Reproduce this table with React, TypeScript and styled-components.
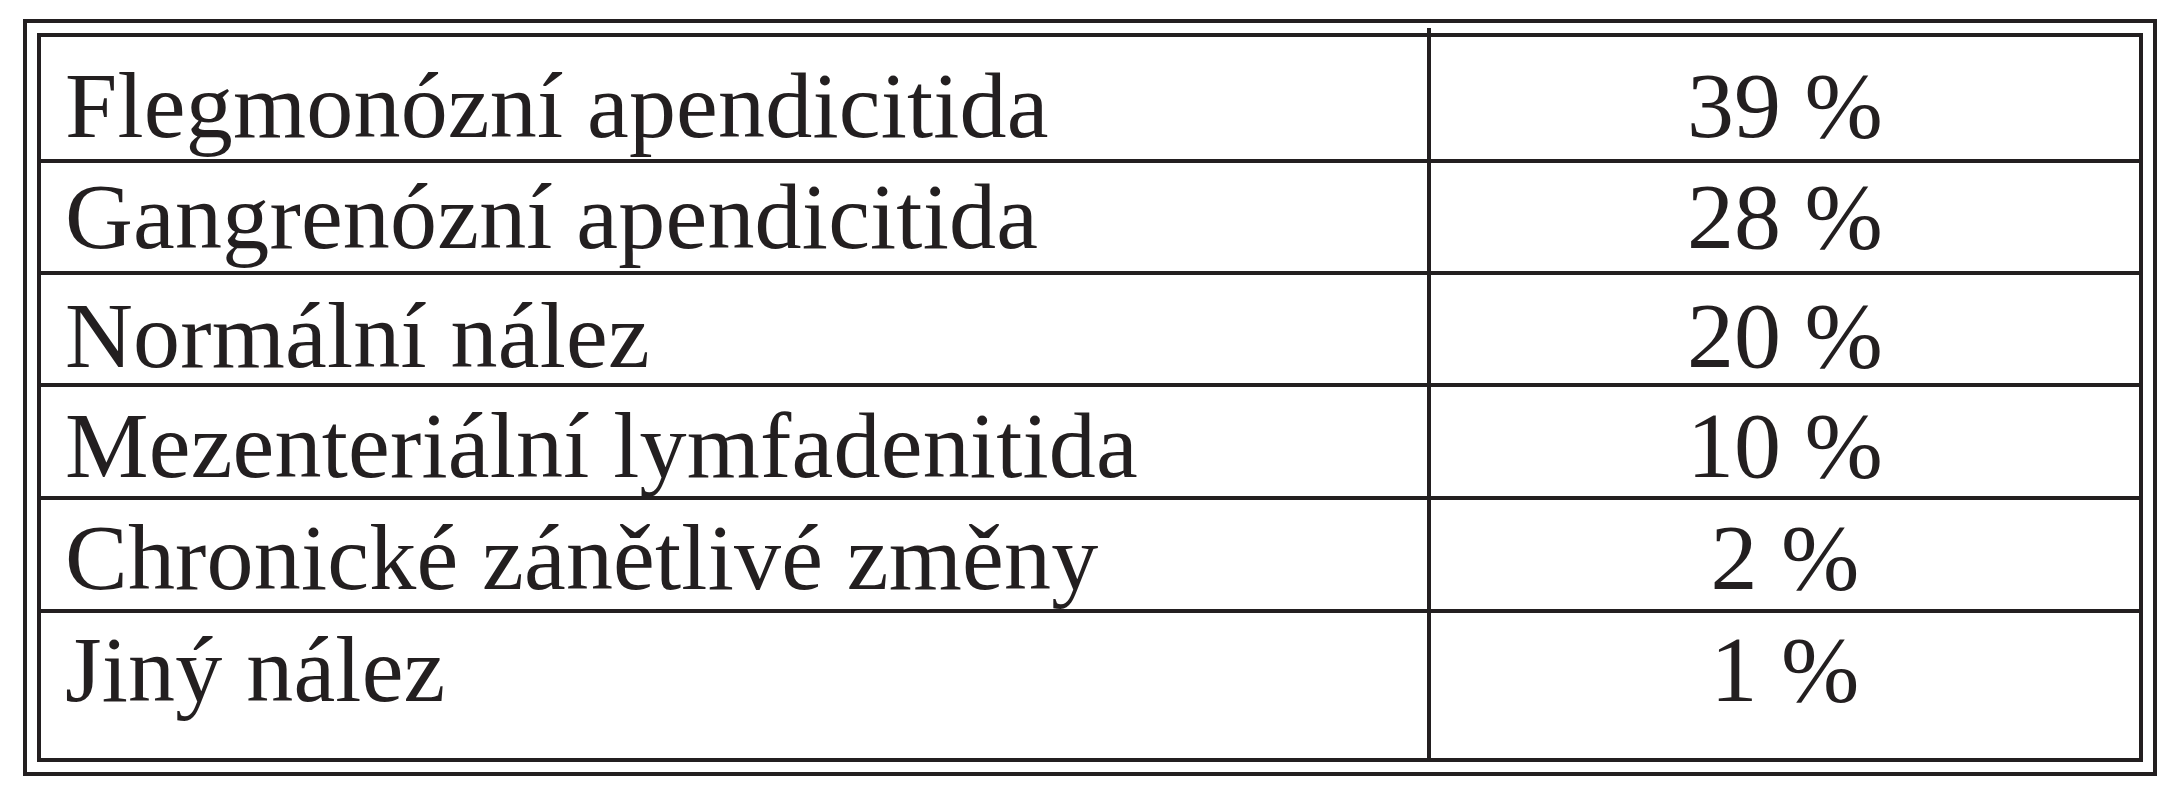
import React from "react";
import styled, { createGlobalStyle } from "styled-components";

const GlobalStyle = createGlobalStyle`
  html, body {
    margin: 0;
    padding: 0;
    background: #ffffff;
  }
  body {
    font-family: "Liberation Serif", "Times New Roman", serif;
    color: #231f20;
  }
`;

const Page = styled.div`
  padding: 19px 0 0 23px;
`;

const OuterFrame = styled.div`
  box-sizing: border-box;
  width: 2134px;
  height: 757px;
  border: 4px solid #231f20;
  padding: 10px;
`;

const InnerFrame = styled.div`
  box-sizing: border-box;
  height: 100%;
  border: 4px solid #231f20;
  display: flex;
  flex-direction: column;
`;

const Row = styled.div<{ $h: number; $first?: boolean }>`
  box-sizing: border-box;
  display: grid;
  grid-template-columns: 1390px 1fr;
  height: ${(p) => p.$h + (p.$first ? 0 : 4)}px;
  border-top: ${(p) => (p.$first ? "none" : "4px solid #231f20")};
`;

const Cell = styled.div<{ $pt: number }>`
  box-sizing: border-box;
  padding-top: ${(p) => p.$pt}px;
  font-size: 94px;
  line-height: 1;
  white-space: nowrap;
`;

const LabelCell = styled(Cell)<{ $stub?: boolean }>`
  position: relative;
  padding-left: 24px;
  letter-spacing: 0.2px;
  border-right: 4px solid #231f20;

  ${(p) =>
    p.$stub &&
    `
    &::before {
      content: "";
      position: absolute;
      top: -9px;
      right: -4px;
      width: 4px;
      height: 9px;
      background: #231f20;
    }
  `}
`;

const ValueCell = styled(Cell)`
  text-align: center;
`;

const rows = [
  { label: "Flegmonózní apendicitida", value: "39 %", h: 122, pt: 21 },
  { label: "Gangrenózní apendicitida", value: "28 %", h: 108, pt: 6 },
  { label: "Normální nález", value: "20 %", h: 108, pt: 13 },
  { label: "Mezenteriální lymfadenitida", value: "10 %", h: 109, pt: 11 },
  { label: "Chronické zánětlivé změny", value: "2 %", h: 109, pt: 10 },
  { label: "Jiný nález", value: "1 %", h: 145, pt: 9 },
];

export default function App() {
  return (
    <>
      <GlobalStyle />
      <Page>
        <OuterFrame>
          <InnerFrame>
            {rows.map((r, i) => (
              <Row key={r.label} $h={r.h} $first={i === 0}>
                <LabelCell $pt={r.pt} $stub={i === 0}>
                  {r.label}
                </LabelCell>
                <ValueCell $pt={r.pt}>{r.value}</ValueCell>
              </Row>
            ))}
          </InnerFrame>
        </OuterFrame>
      </Page>
    </>
  );
}
